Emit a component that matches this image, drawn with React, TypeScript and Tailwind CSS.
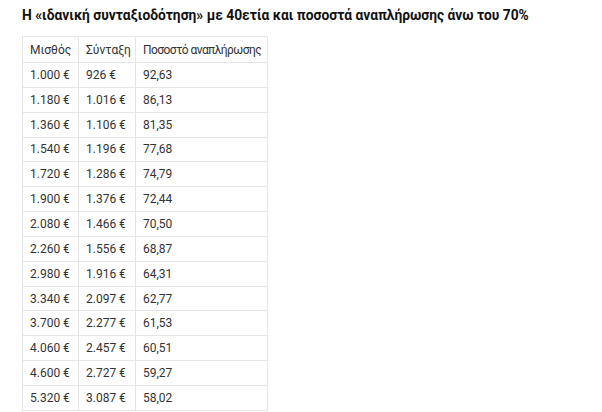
const rows: [string, string, string][] = [
  ["1.000 €", "926 €", "92,63"],
  ["1.180 €", "1.016 €", "86,13"],
  ["1.360 €", "1.106 €", "81,35"],
  ["1.540 €", "1.196 €", "77,68"],
  ["1.720 €", "1.286 €", "74,79"],
  ["1.900 €", "1.376 €", "72,44"],
  ["2.080 €", "1.466 €", "70,50"],
  ["2.260 €", "1.556 €", "68,87"],
  ["2.980 €", "1.916 €", "64,31"],
  ["3.340 €", "2.097 €", "62,77"],
  ["3.700 €", "2.277 €", "61,53"],
  ["4.060 €", "2.457 €", "60,51"],
  ["4.600 €", "2.727 €", "59,27"],
  ["5.320 €", "3.087 €", "58,02"],
];

function Cell({ children }: { children: string }) {
  return (
    <td className="border border-[#e6e6e6] px-[7px] h-[24.85px] align-middle whitespace-nowrap">{children}</td>
  );
}

export default function App() {
  return (
    <div className="w-[602px] h-[412px] overflow-hidden bg-white px-[22px] pt-[6px] font-['Roboto',sans-serif] text-[#222]">
      <h3 className="whitespace-nowrap text-[13.8px] font-bold leading-[18px] text-[#111]">
        Η «ιδανική συνταξιοδότηση» με 40ετία και ποσοστά αναπλήρωσης άνω του 70%
      </h3>
      <table className="mt-[12px] w-[245px] table-fixed border-collapse text-[12px] text-[#333]">
        <colgroup>
          <col className="w-[56px]" />
          <col className="w-[57px]" />
          <col className="w-[132px]" />
        </colgroup>
        <thead>
          <tr>
            <th className="border border-[#e6e6e6] px-[7px] h-[26px] text-left font-normal whitespace-nowrap">Μισθός</th>
            <th className="border border-[#e6e6e6] px-[7px] h-[26px] text-left font-normal whitespace-nowrap">Σύνταξη</th>
            <th className="border border-[#e6e6e6] px-[7px] h-[26px] text-left font-normal whitespace-nowrap tracking-[-0.55px]">
              Ποσοστό αναπλήρωσης
            </th>
          </tr>
        </thead>
        <tbody>
          {rows.map((r) => (
            <tr key={r[0]}>
              <Cell>{r[0]}</Cell>
              <Cell>{r[1]}</Cell>
              <Cell>{r[2]}</Cell>
            </tr>
          ))}
        </tbody>
      </table>
    </div>
  );
}
